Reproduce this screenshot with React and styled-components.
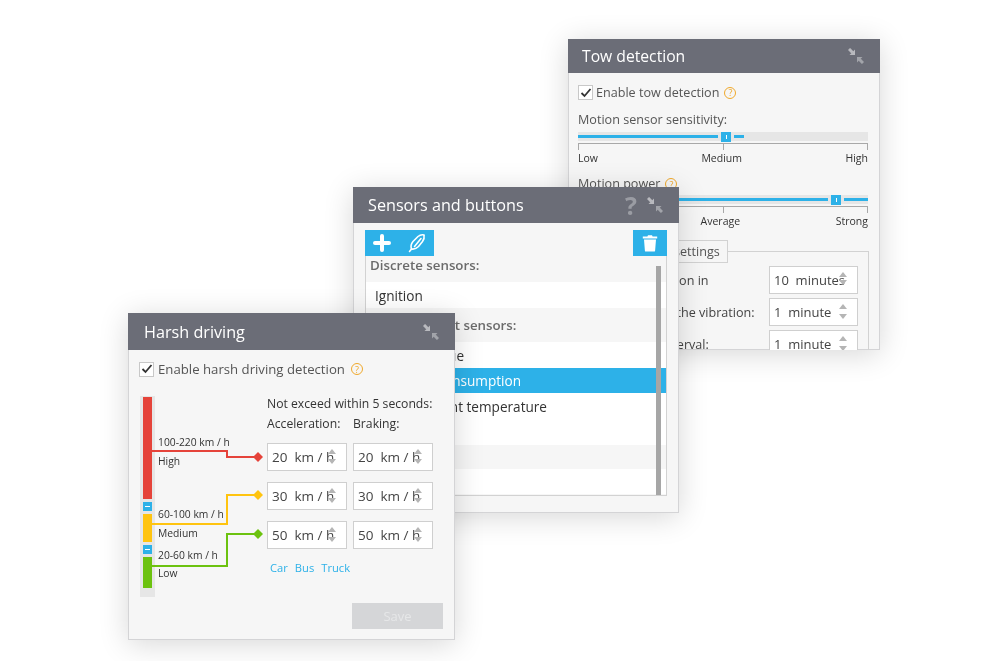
import React from 'react';
import styled, { createGlobalStyle } from 'styled-components';
import { Plus } from 'lucide-react';

const GlobalStyle = createGlobalStyle`
  html, body {
    margin: 0;
    padding: 0;
    background: #ffffff;
  }
  * {
    box-sizing: border-box;
  }
`;

const CollapseIcon = () => (
  <CollapseSvg viewBox="0 0 16 16">
    <path d="M7 7V1.500L1.500 7z" fill="#b9babf" />
    <path d="M1 1l3.500 3.500" stroke="#b9babf" strokeWidth="3" />
    <path d="M9 9v5.500L14.500 9z" fill="#a2a4aa" />
    <path d="M15 15l-3.500-3.500" stroke="#a2a4aa" strokeWidth="3" />
  </CollapseSvg>
);

const HelpIcon = () => <Help>?</Help>;

const FeatherIcon = () => (
  <svg width="20" height="20" viewBox="0 0 20 20" fill="none" stroke="#fff" strokeWidth="1.600" strokeLinecap="round" strokeLinejoin="round">
    <path d="M2.500 18.500l2-2.500" />
    <path d="M4.500 16c-1-2.500-.5-5 1.500-7.500L11 3.500c1.800-1.500 4-2 6-1.500" />
    <path d="M4.500 16c2.500.5 5-.5 7-2.500l4-5c1.500-2 2-4 1.500-6" />
    <path d="M7.500 13.500l6.500-8" />
  </svg>
);

const TrashIcon = () => (
  <svg width="16" height="18" viewBox="0 0 16 18">
    <path d="M6 1.200h4l.6 1.300h4.600v1.900H.8V2.500h4.600z" fill="#fff" />
    <path d="M2 5.500h12l-.9 11.200a1 1 0 0 1-1 .9H3.900a1 1 0 0 1-1-.9z" fill="#fff" />
  </svg>
);

const Check = ({ label, size, gap }) => (
  <CheckRow $size={size} $gap={gap}>
    <CheckBox>
      <svg width="12" height="10" viewBox="0 0 12 10" fill="none" stroke="#333" strokeWidth="1.8">
        <path d="M1.500 5l3 3 6-7" />
      </svg>
    </CheckBox>
    <span>{label}</span>
    <HelpIcon />
  </CheckRow>
);

const Slider = ({ before, after, rest }) => (
  <SliderTrack>
    <SliderLine $width={before} />
    <SliderHandle />
    <SliderLine $width={after} />
    {rest && <SliderRest />}
  </SliderTrack>
);

const Stepper = ({ value, width, size, narrow }) => (
  <StepperBox $width={width} $size={size}>
    <span>{value}</span>
    <Arrows $narrow={narrow}>
      <ArrowUp />
      <ArrowDown />
    </Arrows>
  </StepperBox>
);

const TowWindow = () => (
  <Window $left={568} $top={39} $width={312} $height={311} $z={1}>
    <Header $inset={14}>
      <Title $size={15.7}>Tow detection</Title>
      <CollapseIcon />
    </Header>
    <TowBody>
      <Check label="Enable tow detection" size={12.6} gap={3} />
      <FieldLabel>Motion sensor sensitivity:</FieldLabel>
      <Slider before={140} after={10} rest />
      <Ticks />
      <TickLabels>
        <span>Low</span>
        <span>Medium</span>
        <span>High</span>
      </TickLabels>
      <FieldLabelTight>
        Motion power <HelpIcon />
      </FieldLabelTight>
      <Slider before={251} after={24} />
      <Ticks />
      <TickLabels>
        <span>Weak</span>
        <span>Average</span>
        <span>Strong</span>
      </TickLabels>
      <Settings>
        <SettingsLegend>Additional settings</SettingsLegend>
        <SettingsRow>
          <span>Starting detection in</span>
          <Stepper value="10  minutes" width={89} size={13} narrow />
        </SettingsRow>
        <SettingsRow>
          <span>Notification of the vibration:</span>
          <Stepper value="1  minute" width={89} size={13} />
        </SettingsRow>
        <SettingsRow>
          <span>Notification interval:</span>
          <Stepper value="1  minute" width={89} size={13} />
        </SettingsRow>
      </Settings>
    </TowBody>
  </Window>
);

const sensorRows = [
  { kind: 'section', text: 'Discrete sensors:', height: 26 },
  { kind: 'item', text: 'Ignition', height: 26 },
  { kind: 'section', text: 'Measurement sensors:', height: 34 },
  { kind: 'item', text: 'Engine torque', height: 26 },
  { kind: 'selected', text: 'Total fuel consumption', height: 25 },
  { kind: 'item', text: 'Pump coolant temperature', height: 26 },
  { kind: 'item', text: 'Voltage', height: 26 },
  { kind: 'section', text: 'Other:', height: 24 },
  { kind: 'item', text: 'Panic', height: 25 }
];

const SensorsWindow = () => (
  <Window $left={353} $top={187} $width={326} $height={326} $z={2}>
    <Header $height={36} $inset={15}>
      <Title>Sensors and buttons</Title>
      <HeaderIcons>
        <BigQuestion>?</BigQuestion>
        <CollapseIcon />
      </HeaderIcons>
    </Header>
    <SensorsBody>
      <Toolbar>
        <ToolGroup>
          <Plus size={24} color="#fff" strokeWidth={4} />
          <FeatherIcon />
        </ToolGroup>
        <DeleteButton>
          <TrashIcon />
        </DeleteButton>
      </Toolbar>
      <SensorList>
        {sensorRows.map(row => (
          <SensorRow key={row.text} $kind={row.kind} $height={row.height}>
            {row.text}
          </SensorRow>
        ))}
        <ScrollThumb />
      </SensorList>
    </SensorsBody>
  </Window>
);

const ScaleLines = () => (
  <LinesSvg width="125" height="205" viewBox="0 0 125 205" fill="none" strokeWidth="2">
    <path d="M13 56h75v6h31" stroke="#e5433a" />
    <path d="M119 57l5 5-5 5-5-5z" fill="#e5433a" />
    <path d="M13 129h75v-29h31" stroke="#ffc40f" />
    <path d="M119 95l5 5-5 5-5-5z" fill="#ffc40f" />
    <path d="M13 171h75v-32h31" stroke="#6cc20f" />
    <path d="M119 134l5 5-5 5-5-5z" fill="#6cc20f" />
  </LinesSvg>
);

const speedRows = ['20', '30', '50'];

const HarshWindow = () => (
  <Window $left={128} $top={313} $width={327} $height={327} $z={3}>
    <Header $height={37} $inset={16}>
      <Title>Harsh driving</Title>
      <CollapseIcon />
    </Header>
    <HarshBody>
      <Check label="Enable harsh driving detection" size={13.2} gap={4} />
      <HarshMain>
        <Scale>
          <ScaleTrack>
            <Segment $color="#e5433a" $height={102} />
            <MinusButton />
            <Segment $color="#ffc40f" $height={28} />
            <MinusButton />
            <Segment $color="#6cc20f" $height={31} />
          </ScaleTrack>
          <ScaleLabels>
            <ScaleLabel $top={40}>100-220 km / h</ScaleLabel>
            <ScaleLabel $top={4}>High</ScaleLabel>
            <ScaleLabel $top={38}>60-100 km / h</ScaleLabel>
            <ScaleLabel $top={4}>Medium</ScaleLabel>
            <ScaleLabel $top={7}>20-60 km / h</ScaleLabel>
            <ScaleLabel $top={3}>Low</ScaleLabel>
          </ScaleLabels>
          <ScaleLines />
        </Scale>
        <SpeedForm>
          <SpeedHeading>Not exceed within 5 seconds:</SpeedHeading>
          <SpeedColumns>
            <span>Acceleration:</span>
            <span>Braking:</span>
          </SpeedColumns>
          {speedRows.map(speed => (
            <SpeedRow key={speed}>
              <Stepper value={`${speed}  km / h`} width={80} size={13.5} />
              <Stepper value={`${speed}  km / h`} width={80} size={13.5} />
            </SpeedRow>
          ))}
          <VehicleLinks>
            <span>Car</span>
            <span>Bus</span>
            <span>Truck</span>
          </VehicleLinks>
        </SpeedForm>
      </HarshMain>
      <SaveRow>
        <SaveButton>Save</SaveButton>
      </SaveRow>
    </HarshBody>
  </Window>
);

const App = () => (
  <Desktop>
    <GlobalStyle />
    <TowWindow />
    <SensorsWindow />
    <HarshWindow />
  </Desktop>
);

export default App;

const Desktop = styled.div`
  position: relative;
  width: 992px;
  height: 661px;
  overflow: hidden;
  background: #ffffff;
  font-family: 'Open Sans', sans-serif;
  font-size: 13px;
  color: #444;
  filter: blur(0.3px);
`;

const Window = styled.section`
  position: absolute;
  left: ${props => props.$left}px;
  top: ${props => props.$top}px;
  width: ${props => props.$width}px;
  height: ${props => props.$height}px;
  z-index: ${props => props.$z};
  display: flex;
  flex-direction: column;
  overflow: hidden;
  background: #f6f6f6;
  box-shadow: inset 0 0 0 1px #d4d4d6, 0 4px 28px rgba(0, 0, 0, 0.16);
`;

const Header = styled.header`
  flex: none;
  height: ${props => props.$height || 34}px;
  padding: 0 16px 0 ${props => props.$inset}px;
  display: flex;
  align-items: center;
  justify-content: space-between;
  background: #6b6d77;
  color: #ffffff;
`;

const Title = styled.h2`
  margin: 0;
  font-size: ${props => props.$size || 16.2}px;
  font-weight: 400;
`;

const HeaderIcons = styled.div`
  display: flex;
  align-items: center;
  gap: 10px;
`;

const BigQuestion = styled.span`
  font-size: 25px;
  font-weight: 700;
  line-height: 1;
  color: #9a9ca3;
`;

const CollapseSvg = styled.svg`
  width: 16px;
  height: 16px;
`;

const Help = styled.span`
  display: inline-flex;
  align-items: center;
  justify-content: center;
  width: 12px;
  height: 12px;
  border: 1.3px solid #f0a92c;
  border-radius: 50%;
  color: #f0a92c;
  font-size: 9px;
  line-height: 1;
`;

const CheckRow = styled.div`
  display: flex;
  align-items: center;
  gap: ${props => props.$gap}px;
  font-size: ${props => props.$size}px;
  color: #555;

  ${Help} {
    margin-left: 2px;
  }
`;

const CheckBox = styled.span`
  flex: none;
  width: 15px;
  height: 15px;
  display: flex;
  align-items: center;
  justify-content: center;
  background: #ffffff;
  border: 1px solid #c8c8c8;
`;

const TowBody = styled.div`
  padding: 11px 10px 0;
`;

const FieldLabel = styled.div`
  margin: 10px 0 3px;
  color: #555;
  font-size: 12.600px;
  line-height: 18px;
`;

const FieldLabelTight = styled(FieldLabel)`
  display: flex;
  align-items: center;
  gap: 5px;
  margin: 9px 0 2px;
`;

const SliderTrack = styled.div`
  width: 290px;
  height: 9px;
  display: flex;
  align-items: center;
  background: #e6e6e6;
`;

const SliderLine = styled.div`
  width: ${props => props.$width}px;
  height: 3px;
  background: #2db1e8;
`;

const SliderHandle = styled.div`
  width: 10px;
  height: 10px;
  margin: 0 3px;
  display: flex;
  align-items: center;
  justify-content: center;
  background: #2db1e8;

  &:after {
    content: '';
    width: 1px;
    height: 4px;
    background: #fff;
  }
`;

const SliderRest = styled.div`
  flex: 1;
`;

const Ticks = styled.div`
  position: relative;
  width: 290px;
  height: 7px;
  margin-top: 2px;
  border: 1px solid #a8a8a8;
  border-bottom: 0;

  &:after {
    content: '';
    position: absolute;
    left: 50%;
    top: 0;
    width: 1px;
    height: 6px;
    background: #a8a8a8;
  }
`;

const TickLabels = styled.div`
  width: 290px;
  margin-top: 1px;
  display: flex;
  justify-content: space-between;
  font-size: 10.500px;
  line-height: 15px;
  color: #333;
`;

const Settings = styled.fieldset`
  margin: 11px 0 0;
  padding: 3px 10px 0 11px;
  width: 291px;
  border: 1px solid #d2d2d2;
  min-inline-size: 0;
`;

const SettingsLegend = styled.legend`
  margin-left: 13px;
  padding: 0 7px;
  height: 23px;
  line-height: 21px;
  font-size: 12.600px;
  color: #555;
  background: #f6f6f6;
  border: 1px solid #d2d2d2;
`;

const SettingsRow = styled.div`
  display: flex;
  align-items: center;
  justify-content: space-between;
  height: 28px;
  margin-bottom: 4px;
  font-size: 12.600px;
  color: #444;
`;

const StepperBox = styled.div`
  position: relative;
  flex: none;
  width: ${props => props.$width}px;
  height: 28px;
  padding-left: 4px;
  display: flex;
  align-items: center;
  background: #ffffff;
  border: 1px solid #cfcfcf;
  font-size: ${props => props.$size}px;
  color: #444;
  white-space: pre;
`;

const Arrows = styled.div`
  position: absolute;
  right: 10px;
  top: 5px;
  display: flex;
  flex-direction: column;
  gap: ${props => (props.$narrow ? 3 : 5)}px;
`;

const ArrowUp = styled.i`
  width: 0;
  height: 0;
  border: 4px solid transparent;
  border-top: 0;
  border-bottom: 5px solid #b5b5b5;
`;

const ArrowDown = styled.i`
  width: 0;
  height: 0;
  border: 4px solid transparent;
  border-bottom: 0;
  border-top: 5px solid #b5b5b5;
`;

const SensorsBody = styled.div`
  flex: 1;
  padding: 7px 12px 0;
`;

const Toolbar = styled.div`
  display: flex;
  justify-content: space-between;
`;

const ToolGroup = styled.div`
  width: 69px;
  height: 26px;
  padding: 0 7px 0 5px;
  display: flex;
  align-items: center;
  justify-content: space-between;
  background: #2db1e8;
`;

const DeleteButton = styled.div`
  width: 34px;
  height: 26px;
  display: flex;
  align-items: center;
  justify-content: center;
  background: #2db1e8;
`;

const SensorList = styled.div`
  position: relative;
  width: 302px;
  height: 240px;
  overflow: hidden;
  border: 1px solid #d2d2d2;
  border-top: 0;
`;

const rowBackground = { section: '#f6f6f6', item: '#ffffff', selected: '#2db1e8' };

const SensorRow = styled.div`
  height: ${props => props.$height}px;
  display: flex;
  align-items: ${props => (props.$kind === 'section' ? 'flex-end' : 'center')};
  padding: ${props => (props.$kind === 'section' ? '0 0 8px 4px' : '0 0 0 9px')};
  background: ${props => rowBackground[props.$kind]};
  color: ${props => (props.$kind === 'selected' ? '#fff' : props.$kind === 'section' ? '#6b6b6b' : '#333')};
  font-size: ${props => (props.$kind === 'section' ? 13.3 : 13.6)}px;
  font-weight: ${props => (props.$kind === 'section' ? 600 : 400)};
`;

const ScrollThumb = styled.div`
  position: absolute;
  right: 5px;
  top: 10px;
  bottom: 0;
  width: 5px;
  background: #a6a6a6;
`;

const HarshBody = styled.div`
  flex: 1;
  padding: 10px 12px 11px 11px;
  display: flex;
  flex-direction: column;
`;

const HarshMain = styled.div`
  margin-top: 17px;
  display: flex;
`;

const Scale = styled.div`
  position: relative;
  width: 128px;
  flex: none;
  display: flex;
`;

const ScaleTrack = styled.div`
  width: 15px;
  height: 201px;
  margin: 1px 0 0 1px;
  padding: 1px 3px 0;
  display: flex;
  flex-direction: column;
  background: #e6e6e6;
`;

const Segment = styled.div`
  height: ${props => props.$height}px;
  background: ${props => props.$color};
`;

const MinusButton = styled.div`
  height: 9px;
  margin: 3px 0;
  display: flex;
  align-items: center;
  justify-content: center;
  background: #2db1e8;

  &:after {
    content: '';
    width: 5px;
    height: 1px;
    background: #fff;
  }
`;

const ScaleLabels = styled.div`
  padding: 0 0 0 3px;
  display: flex;
  flex-direction: column;
`;

const ScaleLabel = styled.div`
  margin-top: ${props => props.$top}px;
  font-size: 10.300px;
  line-height: 15px;
  white-space: nowrap;
  color: #333;
`;

const LinesSvg = styled.svg`
  position: absolute;
  left: 0;
  top: 0;
`;

const SpeedForm = styled.div`
  flex: 1;
  color: #333;
`;

const SpeedHeading = styled.div`
  line-height: 18px;
  font-size: 12.200px;
`;

const SpeedColumns = styled.div`
  margin: 2px 0 10px;
  display: grid;
  grid-template-columns: 86px 86px;
  line-height: 18px;
  font-size: 12.200px;
`;

const SpeedRow = styled.div`
  display: flex;
  gap: 6px;
  margin-bottom: 11px;
`;

const VehicleLinks = styled.div`
  margin: 10px 0 0 3px;
  display: flex;
  gap: 7px;
  color: #2db1e8;
  font-size: 11.200px;
`;

const SaveRow = styled.div`
  margin-top: auto;
  display: flex;
  justify-content: flex-end;
`;

const SaveButton = styled.div`
  width: 91px;
  height: 26px;
  display: flex;
  align-items: center;
  justify-content: center;
  background: #d5d6d8;
  color: #e6e7e8;
  font-size: 13px;
`;
